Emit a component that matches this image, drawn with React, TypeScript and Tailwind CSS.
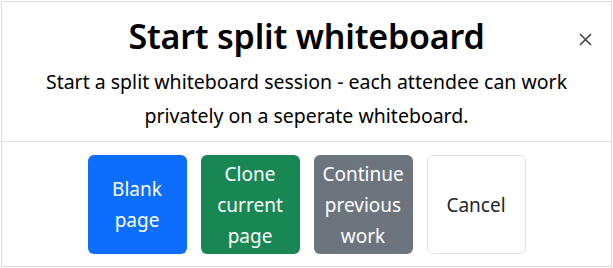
import React from "react";

export default function App() {
  return (
    <div className="w-[613px] h-[268px] bg-white pt-[1px] pl-[1px] pr-[1px] pb-[1px]" style={{ fontFamily: '"Noto Sans", "Open Sans", sans-serif' }}>
      <div className="w-[611px] h-[266px] border border-[#dcdcdc] flex flex-col text-[#212529]">
        <div className="relative h-[140px] border-b border-[#dee2e6] flex flex-col items-center">
          <h1 className="mt-[11px] text-[34px] leading-[46px] font-semibold tracking-[-0.2px] text-black">Start split whiteboard</h1>
          <p className="mt-[6px] text-[19.5px] leading-[34px] text-center w-[580px] text-black">
            Start a split whiteboard session - each attendee can work privately on a seperate whiteboard.
          </p>
          <button className="absolute right-[18px] top-[29px] w-[16px] h-[16px] flex items-center justify-center text-[#444]">
            <svg width="13" height="13" viewBox="0 0 13 13" fill="none" stroke="currentColor" strokeWidth="1.6">
              <path d="M1 1L12 12M12 1L1 12" />
            </svg>
          </button>
        </div>
        <div className="flex-1 flex items-start justify-center gap-[14px] pt-[13px]">
          <button className="w-[99px] h-[99px] rounded-[6px] bg-[#0d6efd] text-white text-[19px] leading-[31px] flex items-center justify-center text-center px-[4px] pt-[1px]">Blank page</button>
          <button className="w-[99px] h-[99px] rounded-[6px] bg-[#198754] text-white text-[19px] leading-[31px] flex items-center justify-center text-center px-[4px] pt-[1px]">Clone current page</button>
          <button className="w-[99px] h-[99px] rounded-[6px] bg-[#6c757d] text-white text-[19px] leading-[31px] flex items-center justify-center text-center px-[2px] pt-[1px]">Continue previous work</button>
          <button className="w-[99px] h-[99px] rounded-[6px] bg-white border border-[#dee2e6] text-[#212529] text-[19px] leading-[31px] flex items-center justify-center text-center px-[4px] pt-[1px]">Cancel</button>
        </div>
      </div>
    </div>
  );
}
